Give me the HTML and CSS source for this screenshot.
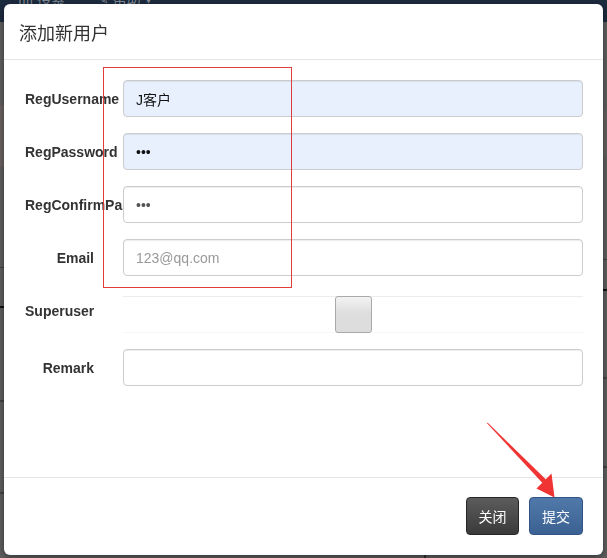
FILE: index.html
```html
<!DOCTYPE html>
<html lang="zh-CN">
<head>
<meta charset="utf-8">
<title>添加新用户</title>
<link rel="stylesheet" href="styles.css">
</head>
<body>
<div class="page">
  <div class="nav">
    <span class="nav-item">ıı|| 搜索</span>
    <span class="nav-item">✎ 帮助 ▾</span>
  </div>
  <div class="page-content"></div>
</div>

<div class="modal">
  <div class="modal-header">
    <h4 class="modal-title">添加新用户</h4>
  </div>
  <div class="modal-body">
    <div class="row">
      <label class="row-label">RegUsername</label>
      <input class="field autofill" type="text" value="J客户">
    </div>
    <div class="row">
      <label class="row-label">RegPassword</label>
      <input class="field autofill" type="password" value="abc">
    </div>
    <div class="row">
      <label class="row-label">RegConfirmPassword</label>
      <input class="field muted" type="password" value="abc">
    </div>
    <div class="row">
      <label class="row-label">Email</label>
      <input class="field" type="text" placeholder="123@qq.com">
    </div>
    <div class="row row-su">
      <label class="row-label">Superuser</label>
      <div class="su-box"><input class="su-check" type="checkbox"></div>
    </div>
    <div class="row">
      <label class="row-label">Remark</label>
      <input class="field" type="text">
    </div>
  </div>
  <div class="modal-footer">
    <button class="btn btn-dark" type="button">关闭</button>
    <button class="btn btn-blue" type="button">提交</button>
  </div>
</div>

<div class="mark-rect"></div>
<svg class="mark-arrow" width="607" height="558" viewBox="0 0 607 558">
  <polygon points="486.5,422.8 488,423 546,479.5 542.5,483" fill="#f03333"/>
  <polygon points="536.5,488.5 551.5,473.5 554.5,497.5" fill="#f03333"/>
</svg>
</body>
</html>
```
FILE: styles.css
```css
* { box-sizing: border-box; }

html, body {
  margin: 0;
  padding: 0;
}

body {
  width: 607px;
  height: 558px;
  overflow: hidden;
  font-family: "Liberation Sans", "Noto Sans CJK SC", sans-serif;
  font-size: 14px;
  color: #333;
}

/* background page (dimmed) */
.page {
  height: 558px;
  display: flex;
  flex-direction: column;
  background: #5e5e5e;
}

.nav {
  height: 22px;
  flex: none;
  background: #1c2b3e;
  display: flex;
  gap: 32px;
  padding-left: 18px;
  overflow: hidden;
}

.nav-item {
  color: #7f8893;
  font-size: 14px;
  line-height: 14px;
  margin-top: -8px;
  font-family: "Liberation Sans", "Noto Sans CJK SC", sans-serif;
}

.page-content {
  flex: 1;
  background:
    linear-gradient(#414141, #414141) 0 245px / 5px 1px no-repeat,
    linear-gradient(#111111, #111111) 0 284px / 5px 2px no-repeat,
    linear-gradient(#434343, #434343) 0 378px / 5px 2px no-repeat,
    linear-gradient(#434343, #434343) 0 470px / 5px 2px no-repeat,
    linear-gradient(#6a6262, #6a6262) 0 83px / 5px 62px no-repeat,
    linear-gradient(#434343, #434343) right 0 top 237px / 5px 1px no-repeat,
    linear-gradient(#111111, #111111) right 0 top 267px / 5px 2px no-repeat,
    linear-gradient(#434343, #434343) right 0 top 355px / 5px 2px no-repeat,
    linear-gradient(#434343, #434343) right 0 top 444px / 5px 2px no-repeat,
    linear-gradient(#666060, #666060) right 0 top 88px / 5px 47px no-repeat,
    linear-gradient(#2e2e2e, #2e2e2e) 424px 532px / 2px 4px no-repeat,
    #5e5e5e;
}

/* modal */
.modal {
  position: fixed;
  left: 4px;
  top: 4px;
  width: 599px;
  height: 551px;
  background: #fff;
  border-radius: 6px;
  box-shadow: 0 2px 6px rgba(0, 0, 0, 0.45);
  display: flex;
  flex-direction: column;
}

.modal-header {
  flex: none;
  height: 56px;
  border-bottom: 1px solid #e5e5e5;
  display: flex;
  align-items: center;
  padding: 0 15px;
}

.modal-title {
  margin: 0;
  font-family: "Noto Sans CJK SC", sans-serif;
  font-weight: 400;
  font-size: 18px;
  line-height: 20px;
  color: #333;
  padding-top: 1px;
}

.modal-body {
  flex: none;
  height: 417px;
  padding: 20px 20px 0 21px;
}

.row {
  display: flex;
  align-items: center;
  height: 37px;
}

.row + .row { margin-top: 16px; }
.row.row-su {
  margin-top: 20px;
  align-items: flex-start;
}

.row-label {
  flex: none;
  width: 69px;
  margin-right: 29px;
  text-align: right;
  white-space: nowrap;
  font-weight: bold;
  font-size: 14px;
  line-height: 16px;
  color: #333;
}

.row-su .row-label { padding-top: 7px; }

.field {
  position: relative;
  flex: 1;
  min-width: 0;
  height: 37px;
  margin: 0;
  padding: 6px 12px;
  border: 1px solid #ccc;
  border-radius: 4px;
  background: #fff;
  box-shadow: inset 0 1px 1px rgba(0, 0, 0, 0.075);
  font-family: "Liberation Sans", "Noto Sans CJK SC", sans-serif;
  font-size: 14px;
  color: #555;
  outline: none;
}

.field::placeholder { color: #999; }

.field.autofill {
  background: #e8f0fe;
  color: #111;
}

.field.muted { color: #555; }

.su-box {
  position: relative;
  flex: 1;
  height: 37px;
  border-top: 1px solid #ececec;
  border-bottom: 1px solid #f7f7f7;
  display: flex;
  justify-content: center;
}

.su-check {
  appearance: none;
  -webkit-appearance: none;
  margin: -1px 0 0;
  width: 37px;
  height: 37px;
  border: 1px solid #a9a9a9;
  border-radius: 3px;
  background: linear-gradient(#f3f3f3, #dedede 45%, #dcdcdc);
}

.modal-footer {
  flex: none;
  height: 78px;
  border-top: 1px solid #e5e5e5;
  padding: 19px 20px 0;
  display: flex;
  justify-content: flex-end;
  align-items: flex-start;
  gap: 10px;
}

.btn {
  height: 38px;
  padding: 0;
  border-radius: 4px;
  font-family: "Noto Sans CJK SC", sans-serif;
  font-size: 14px;
  line-height: 20px;
  white-space: nowrap;
  text-align: center;
  color: #fff;
  cursor: pointer;
}

.btn-dark {
  width: 53px;
  border: 1px solid #262626;
  background: linear-gradient(#5c5c5c, #3a3a3a);
}

.btn-blue {
  width: 54px;
  border: 1px solid #2f5586;
  background: linear-gradient(#5079aa, #3b6192);
}

/* annotations */
.mark-rect {
  position: fixed;
  left: 103px;
  top: 67px;
  width: 189px;
  height: 221px;
  border: 1px solid #e13c3c;
}

.mark-arrow {
  position: fixed;
  left: 0;
  top: 0;
  pointer-events: none;
}
```
